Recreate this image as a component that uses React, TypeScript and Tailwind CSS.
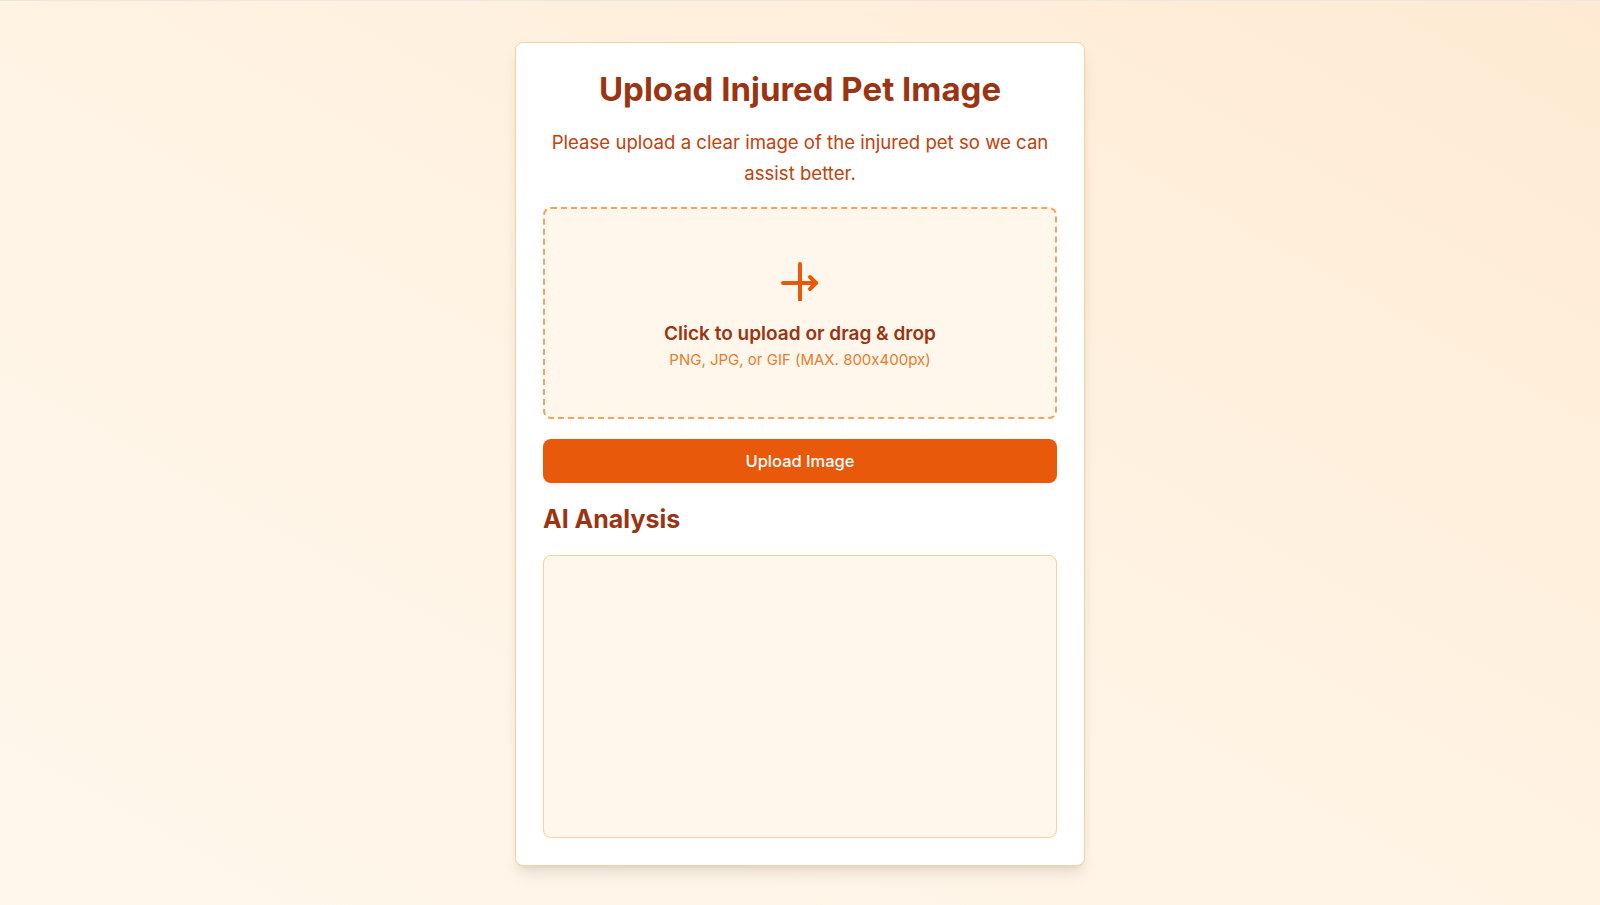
import React from "react";

function UploadIcon() {
  return (
    <svg width="40" height="40" viewBox="0 0 40 40" fill="none" stroke="#e8590c" strokeWidth="4" strokeLinecap="round" strokeLinejoin="round">
      <path d="M20 3v36" />
      <path d="M3 22h33" />
      <path d="M30 16l6 6-6 6" />
    </svg>
  );
}

export default function App() {
  return (
    <main
      className="min-h-screen w-full border-t border-[#ece8e0] bg-gradient-to-bl from-[#feead2] via-[#fff3e4] to-[#fff7ec] flex justify-center pt-[41px] pb-10"
      style={{ fontFamily: "Inter, 'Noto Sans', sans-serif" }}
    >
      <div className="w-[570px] h-fit bg-white border border-[#f1d49e] rounded-lg shadow-lg px-[27px] pt-7 pb-[27px] flex flex-col">
        <h1 className="text-[33px] leading-9 font-bold text-[#9a3412] text-center">
          Upload Injured Pet Image
        </h1>
        <p className="mt-5 text-[18.6px] leading-[31px] text-[#c2410c] text-center">
          Please upload a clear image of the injured pet so we can assist better.
        </p>

        <div className="mt-[18px] h-[212px] rounded-lg border-2 border-dashed border-[#f4a261] bg-[#fff7ec] flex flex-col items-center pt-[52px]">
          <UploadIcon />
          <div className="mt-[19px] text-[19px] leading-7 font-semibold text-[#9a3412]">Click to upload or drag &amp; drop</div>
          <div className="mt-0.5 text-[15px] leading-5 text-[#ea7b2c] [font-feature-settings:'calt'_0]">
            PNG, JPG, or GIF (MAX. 800x400px)
          </div>
        </div>

        <button className="mt-5 h-[44px] w-full rounded-lg bg-[#e8590c] text-white text-[16.5px] font-medium">
          Upload Image
        </button>

        <h2 className="mt-5 text-[25px] leading-8 font-bold text-[#9a3412]">AI Analysis</h2>

        <div className="mt-5 h-[283px] rounded-lg border border-[#f1d49e] bg-[#fff7ec]" />
      </div>
    </main>
  );
}
